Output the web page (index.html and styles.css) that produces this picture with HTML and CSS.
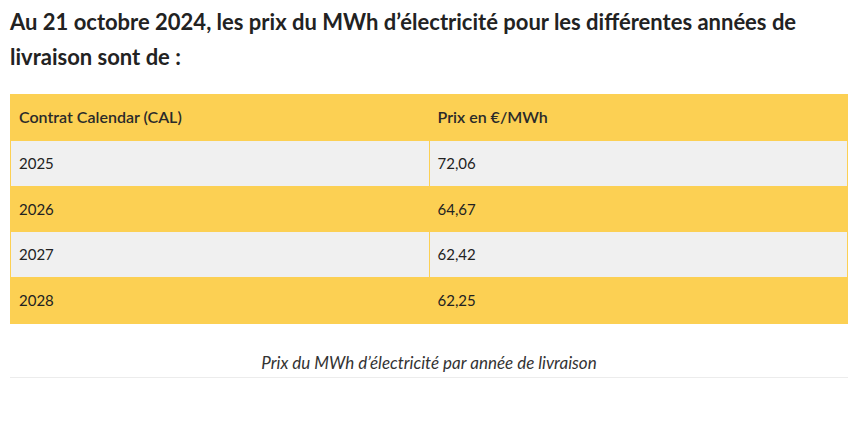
FILE: index.html
```html
<!DOCTYPE html>
<html lang="fr">
<head>
<meta charset="utf-8">
<link rel="stylesheet" href="styles.css">
</head>
<body>
<div class="wrap">
  <h2 class="title">Au 21 octobre 2024, les prix du MWh d’électricité pour les différentes années de livraison sont de :</h2>
  <figure class="fig">
    <table class="prices">
      <thead>
        <tr><th>Contrat Calendar (CAL)</th><th>Prix en €/MWh</th></tr>
      </thead>
      <tbody>
        <tr class="alt"><td>2025</td><td>72,06</td></tr>
        <tr><td>2026</td><td>64,67</td></tr>
        <tr class="alt"><td>2027</td><td>62,42</td></tr>
        <tr><td>2028</td><td>62,25</td></tr>
      </tbody>
    </table>
    <figcaption class="caption">Prix du MWh d’électricité par année de livraison</figcaption>
  </figure>
</div>
</body>
</html>
```

FILE: styles.css
```css
html, body {
  margin: 0;
  padding: 0;
  background: #fff;
}
body {
  font-family: Lato, "Open Sans", sans-serif;
  color: #222;
}
.wrap {
  padding: 0 8px 0 10px;
}
.title {
  font-size: 22px;
  font-weight: 700;
  line-height: 35px;
  margin: 4px 0 20px 0;
  color: #222;
}
.fig {
  margin: 0;
}
.prices {
  width: 100%;
  border-collapse: collapse;
  background: #fcd053;
  font-size: 15px;
}
.prices th, .prices td {
  text-align: left;
  padding: 12px 8px;
  line-height: 20.8px;
  border: 1px solid #fcd053;
  width: 50%;
}
.prices th {
  font-size: 16px;
  font-weight: 600;
  color: #2a2a2a;
}
.prices td {
  color: #222;
}
.prices tr.alt td {
  background: #f0f0f0;
}
.caption {
  text-align: center;
  font-style: italic;
  font-size: 17px;
  color: #333;
  padding: 28px 0 4px;
  border-bottom: 1px solid #ececec;
}
```
